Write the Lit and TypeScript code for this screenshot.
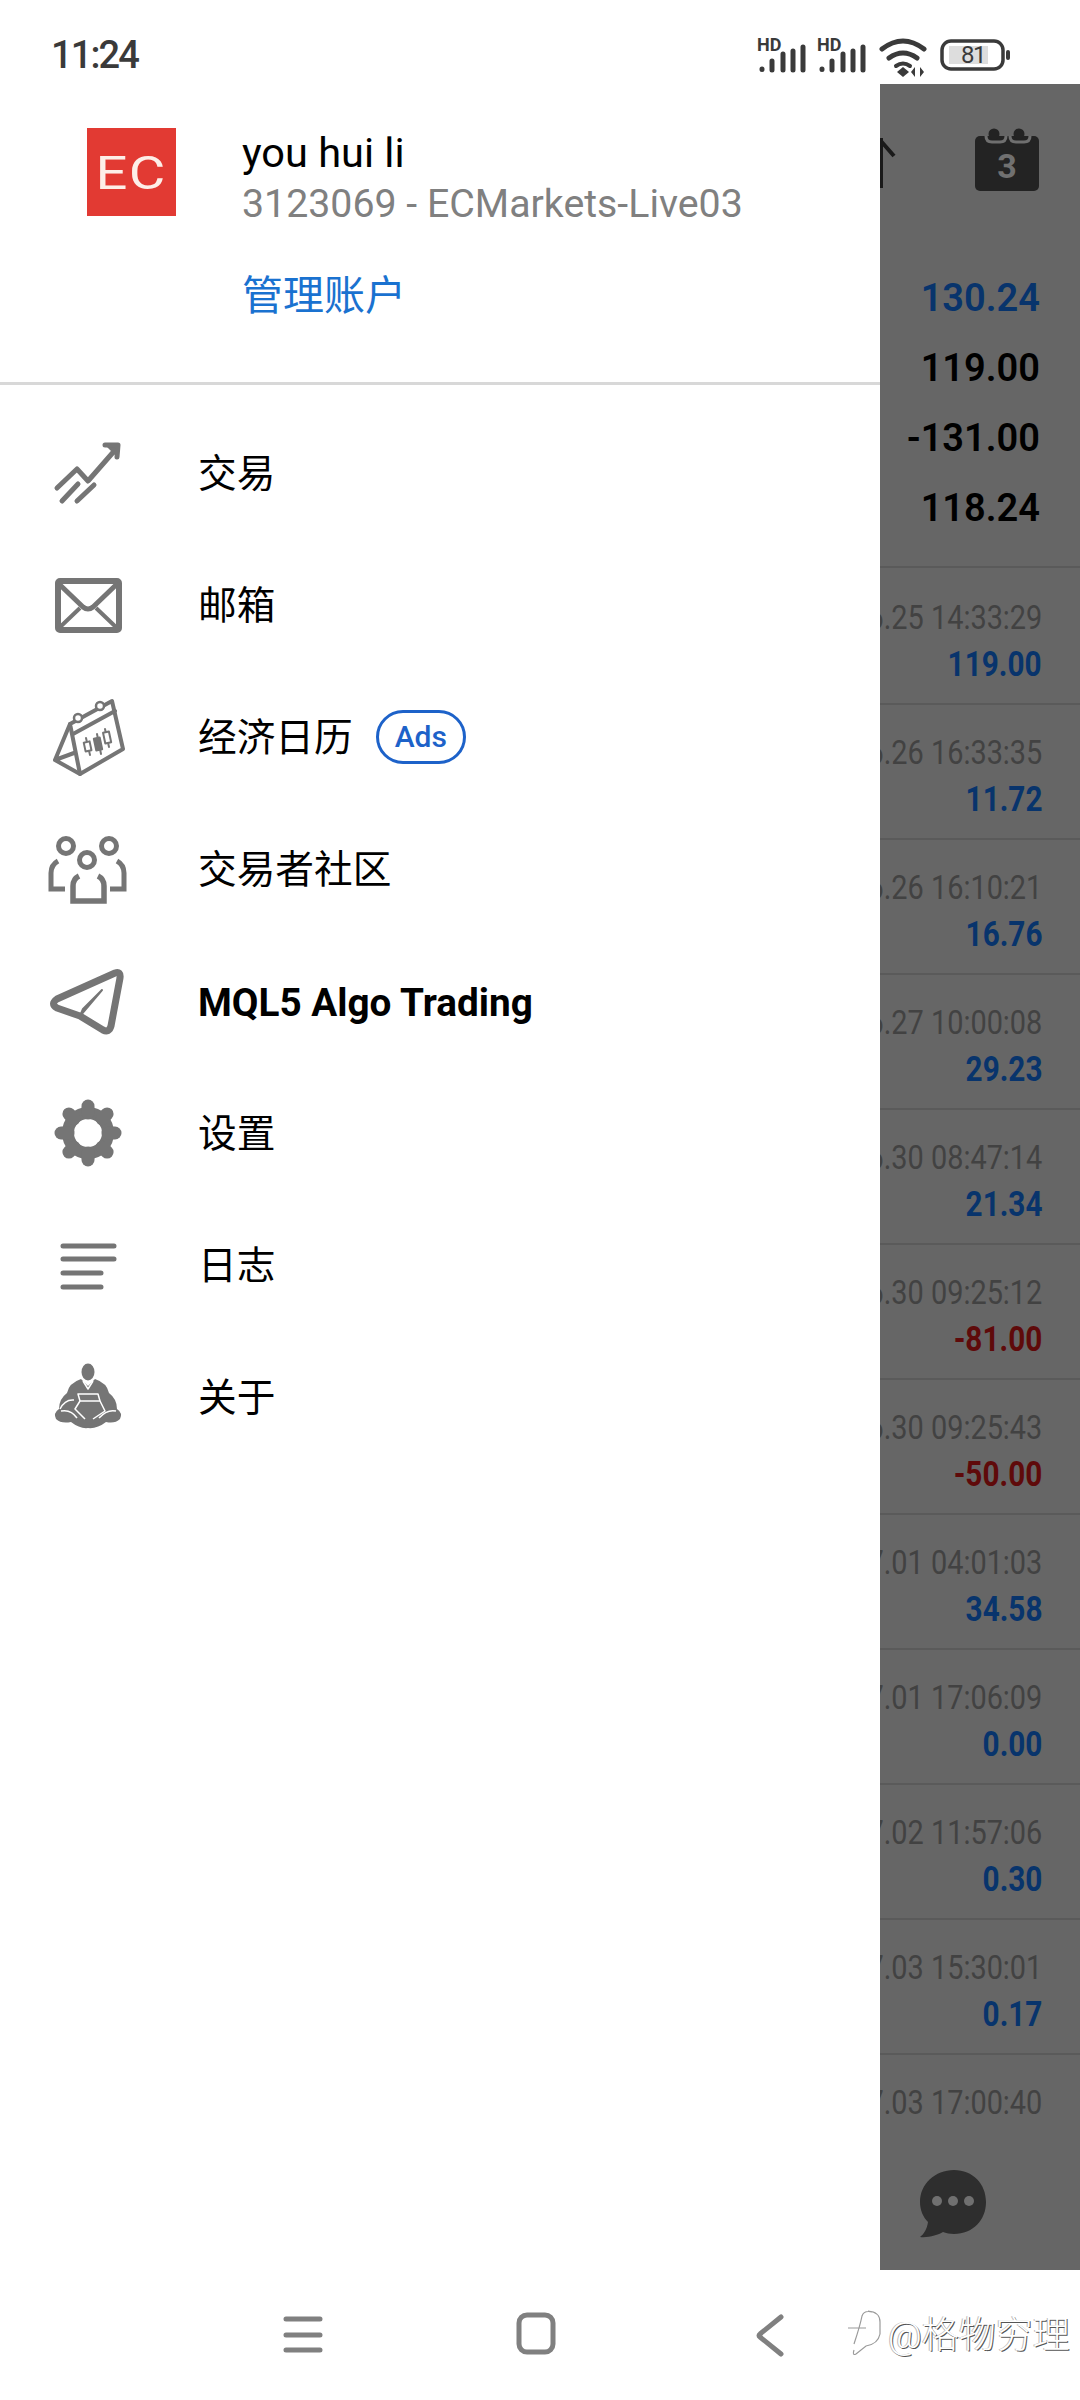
import { LitElement, css, html, svg } from 'lit';
import { customElement, property } from 'lit/decorators.js';

interface Deal {
  date: string;
  amount?: string;
}

const DEALS: Deal[] = [
  { date: '2024.06.25 14:33:29', amount: '119.00' },
  { date: '2024.06.26 16:33:35', amount: '11.72' },
  { date: '2024.06.26 16:10:21', amount: '16.76' },
  { date: '2024.06.27 10:00:08', amount: '29.23' },
  { date: '2024.06.30 08:47:14', amount: '21.34' },
  { date: '2024.06.30 09:25:12', amount: '-81.00' },
  { date: '2024.06.30 09:25:43', amount: '-50.00' },
  { date: '2024.07.01 04:01:03', amount: '34.58' },
  { date: '2024.07.01 17:06:09', amount: '0.00' },
  { date: '2024.07.02 11:57:06', amount: '0.30' },
  { date: '2024.07.03 15:30:01', amount: '0.17' },
  { date: '2024.07.03 17:00:40' },
];

const gearTeeth = [0, 45, 90, 135, 180, 225, 270, 315].map((deg) => {
  const a = (deg * Math.PI) / 180;
  return svg`<line x1=${41 + 20 * Math.sin(a)} y1=${40 - 20 * Math.cos(a)} x2=${41 + 27 * Math.sin(a)} y2=${40 - 27 * Math.cos(a)} />`;
});

const ICONS = {
  trade: html`<svg viewBox="0 0 80 80" fill="none" stroke="#757575" stroke-width="5" stroke-linecap="round" stroke-linejoin="round">
    <path d="M10 55 30 36 41 48 69 16" />
    <path d="M58 12H71L70 24" stroke-width="5" fill="#757575" />
    <path d="M15 68 31 51M30 68 47 52" />
  </svg>`,
  mail: html`<svg viewBox="0 0 80 80" fill="none" stroke="#757575" stroke-linejoin="round">
    <rect x="11" y="16" width="61" height="49" rx="2" stroke-width="6" />
    <path d="M11 18 36 42Q41 46 46 42L71 18" stroke-width="5" />
    <path d="M11 64 33 43M71 64 49 43" stroke-width="4" />
  </svg>`,
  calendar: html`<svg viewBox="0 0 80 80" fill="none" stroke="#757575" stroke-width="4" stroke-linecap="round" stroke-linejoin="round">
    <path d="M23 27 65 4 76 52 33 77Z" />
    <path d="M23 27 8 63 33 77M8 63 27 56M26 37 68 14" />
    <circle cx="31" cy="21" r="4" stroke-width="2.5" fill="#fff" />
    <circle cx="53" cy="9" r="4" stroke-width="2.5" fill="#fff" />
    <g stroke-width="2">
      <path d="M39 41 43 58M50 37 54 57M58 32 62 50" />
      <rect x="37.5" y="45" width="6" height="9" transform="rotate(-12 40 49)" fill="#fff" />
      <rect x="48" y="41" width="6" height="12" transform="rotate(-12 51 47)" fill="#757575" />
      <rect x="57" y="35" width="6" height="11" transform="rotate(-12 60 40)" fill="#fff" />
    </g>
  </svg>`,
  community: html`<svg viewBox="0 0 80 80" fill="none" stroke="#757575" stroke-width="5" stroke-linejoin="miter">
    <circle cx="19" cy="17" r="7.5" />
    <circle cx="62" cy="17" r="7.5" />
    <circle cx="40" cy="31" r="7.5" />
    <path d="M11 32Q4 36 4 44V60H18M70 32Q77 36 77 44V60H63" />
    <path d="M32 47Q26 50 26 57V72H57V57Q57 50 51 47" stroke-width="5.5" />
  </svg>`,
  send: html`<svg viewBox="0 0 80 80" fill="none" stroke="#757575" stroke-width="7" stroke-linejoin="round" stroke-linecap="round">
    <path d="M68 12 10 38Q3 43 10 47L33 55 56 69Q62 72 64 65L73 17Q74 10 68 12Z" />
    <path d="M33 55 55 29 36 48Z" stroke-width="2" fill="#757575" />
  </svg>`,
  gear: html`<svg viewBox="0 0 80 80" fill="none">
    <circle cx="41" cy="40" r="20" stroke="#757575" stroke-width="12" />
    <g stroke="#757575" stroke-width="13" stroke-linecap="round">${gearTeeth}</g>
  </svg>`,
  log: html`<svg viewBox="0 0 80 80" fill="none" stroke="#757575" stroke-width="5" stroke-linecap="round">
    <path d="M16 21H67M16 34H67M16 48H54M16 62H54" />
  </svg>`,
  about: html`<svg viewBox="0 0 80 80">
    <ellipse cx="41" cy="15" rx="6.5" ry="8.5" fill="#757575" />
    <path
      fill="#757575"
      d="M34 22Q22 26 20 36 12 42 12 52 6 56 9 62 14 67 24 65 33 72 41 71 50 72 59 65 68 67 73 62 76 56 70 52 70 42 62 36 60 26 48 22L41 29Z"
    />
    <g fill="none" stroke="#fff" stroke-width="1.5" stroke-linejoin="round">
      <path d="M31 37H51L53 44H33Z" />
      <path d="M33 44 28 52 38 62M53 44 58 54 46 62" />
      <path d="M27 43Q18 42 13 52M14 54Q24 52 30 61M69 54Q60 52 52 61" />
      <path d="M36 24 41 32 46 24" />
    </g>
  </svg>`,
};

@customElement('app-root')
export class AppRoot extends LitElement {
  @property({ type: Array })
  deals: Deal[] = DEALS;

  private renderStatus() {
    const signal = (x: number) => svg`
      <text class="hd" x=${x} y="21">HD</text>
      <g stroke="#3a3a3a" stroke-width="5" stroke-linecap="round">
        <path d=${`M${x + 5} 39V39.5M${x + 15} 31V40M${x + 26} 24V40M${x + 36} 21V40M${x + 46} 17V40`} />
      </g>`;
    return html`
      <div class="status">
        <span class="time">11:24</span>
        <svg class="status-icons" width="264" height="50" viewBox="0 0 264 50" fill="none">
          ${signal(0)} ${signal(60)}
          <g stroke="#3a3a3a" stroke-width="5" fill="none" stroke-linecap="round">
            <path d="M125 19Q146 3 167 19" />
            <path d="M132 28Q146 18 160 28" />
            <path d="M139 36Q146 31 153 36" stroke-width="4" />
          </g>
          <path d="M140 42 146 37 152 42 146 47Z" fill="#3a3a3a" />
          <path d="M158 37V47L154 42ZM163 37V47L167 42Z" fill="#3a3a3a" />
          <rect x="185" y="11" width="61" height="28" rx="9" stroke="#3a3a3a" stroke-width="3.5" />
          <rect x="192" y="16" width="39" height="18" fill="#dddddd" />
          <text class="battery" x="204" y="33">81</text>
          <rect x="249" y="20" width="4" height="10" rx="2" fill="#3a3a3a" />
        </svg>
      </div>
    `;
  }

  private renderDrawer() {
    const items = [
      { icon: ICONS.trade, label: '交易' },
      { icon: ICONS.mail, label: '邮箱' },
      { icon: ICONS.calendar, label: '经济日历', ads: true },
      { icon: ICONS.community, label: '交易者社区' },
      { icon: ICONS.send, label: 'MQL5 Algo Trading', strong: true },
      { icon: ICONS.gear, label: '设置' },
      { icon: ICONS.log, label: '日志' },
      { icon: ICONS.about, label: '关于' },
    ];
    return html`
      <nav class="drawer">
        <header class="account">
          <div class="logo"><span>EC</span></div>
          <div class="who">
            <div class="name">you hui li</div>
            <div class="server">3123069 - ECMarkets-Live03</div>
            <div class="manage">管理账户</div>
          </div>
        </header>
        <div class="menu">
          ${items.map(
            (item) => html`
              <div class="item">
                <span class="item-icon">${item.icon}</span>
                <span class="${item.strong ? 'label strong' : 'label'}">${item.label}</span>
                ${item.ads ? html`<span class="ads">Ads</span>` : ''}
              </div>
            `
          )}
        </div>
      </nav>
    `;
  }

  private renderPanel() {
    return html`
      <section class="panel">
        <svg class="peek" width="16" height="50" viewBox="0 0 16 50" fill="none" stroke="#1a1a1a" stroke-width="4">
          <path d="M0 2 14 18M1 0V50" />
        </svg>
        <div class="tools">
          <svg width="64" height="72" viewBox="0 0 64 72" fill="none">
            <rect x="0" y="14" width="64" height="55" rx="5" fill="#232323" />
            <path d="M11 14Q11 20 17 20H25Q31 20 31 14M35 14Q35 20 41 20H49Q55 20 55 14" stroke="#6f6f6f" stroke-width="3" />
            <circle cx="19" cy="12" r="5.5" fill="#232323" />
            <circle cx="44" cy="12" r="5.5" fill="#232323" />
            <text class="cal-num" x="32" y="56" text-anchor="middle">3</text>
          </svg>
        </div>
        <div class="summary">
          <div class="total">130.24</div>
          <div>119.00</div>
          <div>-131.00</div>
          <div>118.24</div>
        </div>
        <div class="deals">
          ${this.deals.map(
            (deal) => html`
              <div class="deal">
                <div class="line"><span class="date">${deal.date}</span></div>
                ${deal.amount
                  ? html`<div class="line">
                      <span class="${deal.amount.startsWith('-') ? 'amount loss' : 'amount'}">${deal.amount}</span>
                    </div>`
                  : ''}
              </div>
            `
          )}
        </div>
        <svg class="chat" width="70" height="70" viewBox="0 0 70 70">
          <path d="M35 1C16 1 1 15 1 33 1 41 4 48 9 53 8 60 5 65 1 68 9 69 19 66 24 63 27 64 31 65 35 65 54 65 67 51 67 33 67 15 54 1 35 1Z" fill="#2e2e2e" />
          <circle cx="18" cy="32" r="5" fill="#707070" />
          <circle cx="34" cy="32" r="5" fill="#707070" />
          <circle cx="50" cy="32" r="5" fill="#707070" />
        </svg>
      </section>
    `;
  }

  render() {
    return html`
      ${this.renderStatus()}
      <main class="main">${this.renderDrawer()} ${this.renderPanel()}</main>
      <footer class="nav">
        <svg width="60" height="60" viewBox="0 0 60 60" fill="none" stroke="#808080" stroke-width="5" stroke-linecap="round">
          <path d="M13 11H47M13 27H47M13 42H47" />
        </svg>
        <svg width="60" height="60" viewBox="0 0 60 60" fill="none" stroke="#808080" stroke-width="5">
          <rect x="13" y="7" width="34" height="37" rx="8" />
        </svg>
        <svg width="60" height="60" viewBox="0 0 60 60" fill="none" stroke="#808080" stroke-width="5" stroke-linecap="round" stroke-linejoin="round">
          <path d="M42 9 21 26Q19 27.5 21 29L42 46" />
        </svg>
        <div class="mark">
          <svg width="42" height="52" viewBox="0 0 42 52" fill="none" stroke="#9a9a9a" stroke-width="1.2">
            <path d="M26 5Q38 6 38 16V28Q36 38 24 40L14 48Q10 50 12 44M12 38Q18 20 20 10 22 4 30 6M6 22H24" />
          </svg>
          <span class="mark-text">@格物穷理</span>
        </div>
      </footer>
    `;
  }

  static styles = css`
    :host {
      display: block;
      position: relative;
      width: 1080px;
      height: 2400px;
      overflow: hidden;
      background: #fff;
      font-family: 'Roboto', 'Noto Sans CJK SC', sans-serif;
    }

    svg {
      display: block;
      flex-shrink: 0;
    }

    .status {
      height: 84px;
      display: flex;
      align-items: center;
      justify-content: space-between;
      padding: 0 67px 0 51px;
      box-sizing: border-box;
    }

    .time {
      font-size: 38px;
      font-weight: 500;
      letter-spacing: -1.9px;
      color: #3a3a3a;
      position: relative;
      top: 13px;
      line-height: 58px;
    }

    .status-icons {
      margin-top: 26px;
      margin-right: -8px;
    }

    .hd {
      font: 700 18px 'Roboto', sans-serif;
      fill: #3a3a3a;
    }

    .battery {
      font: 400 24px 'Roboto', sans-serif;
      letter-spacing: -1.5px;
      fill: #3a3a3a;
    }

    .main {
      display: flex;
      height: 2186px;
    }

    .drawer {
      width: 880px;
      background: #fff;
      flex-shrink: 0;
    }

    .account {
      display: flex;
      height: 298px;
      box-sizing: content-box;
      border-bottom: 3px solid #d8d8d8;
      padding-left: 87px;
      gap: 66px;
    }

    .logo {
      display: flex;
      align-items: center;
      justify-content: center;
      width: 89px;
      height: 88px;
      margin-top: 44px;
      background: #e23a33;
      color: #fdeee8;
      font-size: 46px;
      font-weight: 400;
      line-height: 88px;
    }

    .logo span {
      display: block;
      letter-spacing: 1px;
      transform: scaleX(1.22) translateY(1px);
    }

    .who {
      padding-top: 43px;
    }

    .name {
      font-size: 41.5px;
      line-height: 52px;
      color: #000;
    }

    .server {
      font-size: 39.3px;
      line-height: 51px;
      color: #808080;
    }

    .manage {
      font-size: 41px;
      line-height: 60px;
      margin-top: 36px;
      color: #1a72d0;
    }

    .menu {
      padding-top: 22px;
    }

    .item {
      display: flex;
      align-items: center;
      height: 132px;
      padding-left: 47px;
    }

    .item-icon {
      width: 80px;
      height: 80px;
      margin-right: 71px;
    }

    .label {
      font-size: 38.7px;
      color: #000;
      padding-bottom: 6px;
    }

    .strong {
      font-weight: 700;
      padding-bottom: 0;
      padding-top: 2px;
    }

    .ads {
      margin-left: 23px;
      width: 90px;
      height: 54px;
      box-sizing: border-box;
      border: 3px solid #1d62c9;
      border-radius: 27px;
      color: #1d62c9;
      font-size: 30px;
      font-weight: 500;
      line-height: 48px;
      text-align: center;
    }

    .panel {
      position: relative;
      flex: 1;
      overflow: hidden;
      background: #666666;
    }

    .peek {
      position: absolute;
      left: 0;
      top: 54px;
    }

    .tools {
      display: flex;
      justify-content: flex-end;
      padding: 38px 41px 0 0;
    }

    .cal-num {
      font: 700 34px 'Roboto', sans-serif;
      fill: #707070;
    }

    .summary {
      margin-top: 69px;
      padding-right: 40px;
      height: 303px;
      font-size: 38px;
      font-weight: 600;
      line-height: 70px;
      text-align: right;
      color: #000;
      border-bottom: 2px solid #5a5a5a;
      box-sizing: content-box;
    }

    .total {
      color: #08346c;
    }

    .deal {
      height: 135px;
      box-sizing: border-box;
      padding: 23px 38px 0 0;
      border-bottom: 2px solid #5a5a5a;
    }

    .deal:first-child {
      height: 137px;
      padding-top: 25px;
    }

    .deal:last-child {
      border-bottom: 0;
    }

    .line {
      display: flex;
      justify-content: flex-end;
      height: 48px;
    }

    .date,
    .amount {
      display: block;
      flex-shrink: 0;
      white-space: nowrap;
      line-height: 48px;
      transform-origin: right center;
      transform: scaleX(0.85);
    }

    .date {
      font-size: 34px;
      color: #424242;
    }

    .amount {
      font-size: 35px;
      font-weight: 700;
      color: #08346c;
    }

    .loss {
      color: #5f0a0a;
    }

    .chat {
      position: absolute;
      left: 39px;
      top: 2085px;
    }

    .nav {
      position: relative;
      display: flex;
      align-items: flex-start;
      height: 130px;
      padding: 38px 0 0 273px;
      box-sizing: border-box;
      gap: 173px;
    }

    .mark {
      position: absolute;
      left: 842px;
      top: 35px;
      display: flex;
      align-items: center;
    }

    .mark-text {
      font-size: 37px;
      font-weight: 300;
      color: #fff;
      margin-left: 4px;
      text-shadow: 1px 1px 0 #555, -1px 0 0 #bbb;
    }
  `;
}

declare global {
  interface HTMLElementTagNameMap {
    'app-root': AppRoot;
  }
}
